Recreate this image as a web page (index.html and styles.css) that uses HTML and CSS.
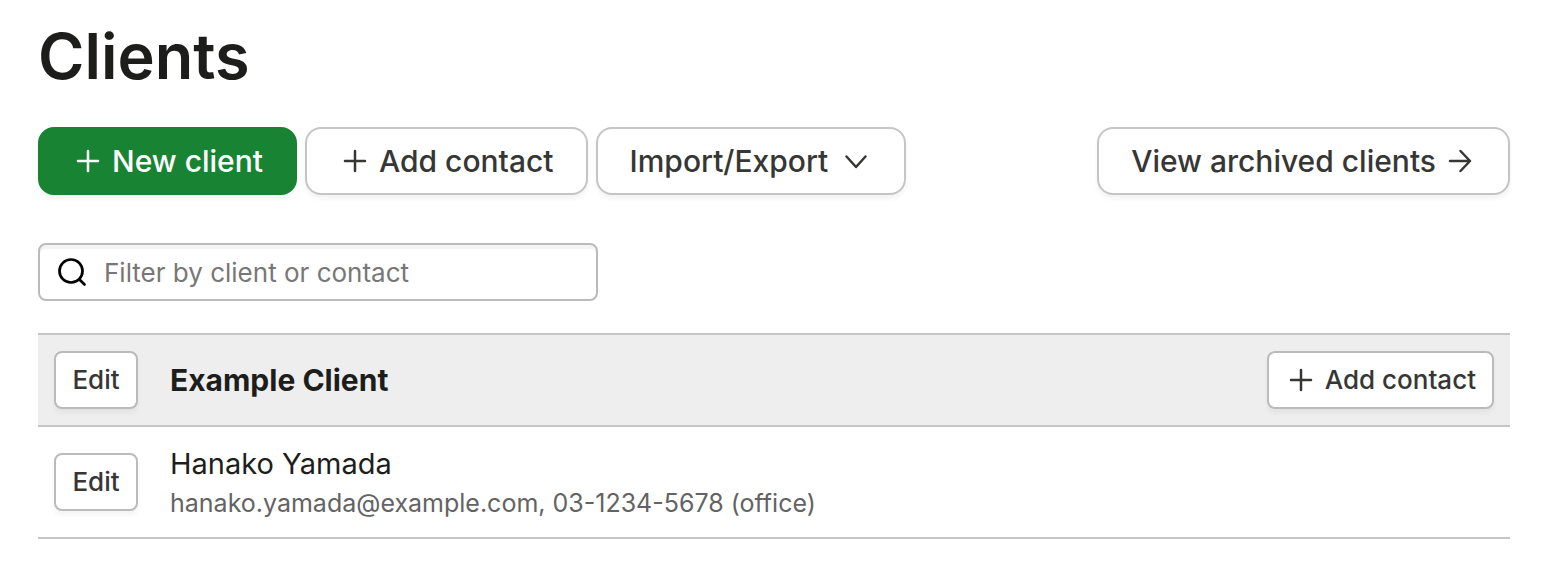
FILE: index.html
```html
<!DOCTYPE html>
<html lang="en">
<head>
<meta charset="utf-8">
<meta name="viewport" content="width=device-width, initial-scale=1">
<title>Clients</title>
<link rel="stylesheet" href="styles.css">
</head>
<body>
<main class="page">
  <h1 class="page-title">Clients</h1>

  <div class="toolbar">
    <button class="button button-primary" type="button">
      <svg class="icon" viewBox="0 0 32 32" aria-hidden="true"><path d="M16 6v20M6 16h20"/></svg>
      New client
    </button>
    <button class="button" type="button">
      <svg class="icon" viewBox="0 0 32 32" aria-hidden="true"><path d="M16 6v20M6 16h20"/></svg>
      Add contact
    </button>
    <button class="button button-menu" type="button" aria-haspopup="menu">
      Import/Export
      <svg class="icon" viewBox="0 0 32 32" aria-hidden="true"><path d="M6.500 11.500l9.500 10.500L25.500 11.500"/></svg>
    </button>
    <a class="button toolbar-end" href="#archived">
      View archived clients
      <svg class="icon" viewBox="0 0 32 32" aria-hidden="true"><path d="M6 16h20M16.500 6l9.500 10l-9.500 10"/></svg>
    </a>
  </div>

  <div class="search">
    <svg class="icon search-icon" viewBox="0 0 32 32" aria-hidden="true"><circle cx="15" cy="15" r="11.500"/><path d="M23.200 23.200l5.300 5.300"/></svg>
    <input class="search-input" type="search" placeholder="Filter by client or contact" aria-label="Filter by client or contact">
  </div>

  <section class="client">
    <header class="client-header">
      <button class="button button-small" type="button">Edit</button>
      <h2 class="client-name">Example Client</h2>
      <button class="button button-small" type="button">
        <svg class="icon" viewBox="0 0 32 32" aria-hidden="true"><path d="M16 6v20M6 16h20"/></svg>
        Add contact
      </button>
    </header>
    <ul class="contacts">
      <li class="contact">
        <button class="button button-small" type="button">Edit</button>
        <div class="contact-info">
          <p class="contact-name">Hanako Yamada</p>
          <p class="contact-detail">hanako.yamada@example.com, 03-1234-5678 (office)</p>
        </div>
      </li>
    </ul>
  </section>
</main>
</body>
</html>
```
FILE: styles.css
```css
* {
  box-sizing: border-box;
}

body {
  margin: 0;
  background: #fff;
  color: #1d1e1c;
  font-family: Inter, "Liberation Sans", sans-serif;
}

h1, h2, p, ul {
  margin: 0;
  padding: 0;
}

.page {
  padding: 16px 34px 38px 38px;
}

.page-title {
  margin-bottom: 31px;
  font-size: 63px;
  font-weight: 600;
  line-height: 80px;
}

.toolbar {
  display: flex;
  flex-wrap: wrap;
  gap: 8px;
  margin-bottom: 48px;
}

.toolbar-end {
  margin-left: auto;
}

.button {
  display: inline-flex;
  align-items: center;
  justify-content: center;
  gap: 8px;
  flex-shrink: 0;
  padding: 12px 32px;
  border: 2px solid #c5c5c5;
  border-radius: 16px;
  background: #fff;
  color: #363735;
  box-shadow: 0 4px 4px rgba(29, 30, 28, 0.05);
  font-family: inherit;
  font-size: 30px;
  font-weight: 500;
  line-height: 40px;
  text-decoration: none;
  white-space: nowrap;
  cursor: pointer;
}

.button-primary {
  border-color: #188433;
  background: #188433;
  color: #fff;
}

.button-menu {
  gap: 12px;
}

.button-small {
  min-width: 84px;
  padding: 7px 16px;
  border-color: #bbb;
  border-radius: 8px;
  font-size: 26px;
}

.icon {
  flex-shrink: 0;
  width: 32px;
  height: 32px;
  fill: none;
  stroke: currentColor;
  stroke-width: 2.500;
  stroke-linecap: round;
  stroke-linejoin: round;
}

.search {
  display: flex;
  align-items: center;
  gap: 16px;
  width: 100%;
  max-width: 560px;
  margin-bottom: 32px;
  padding: 7px 16px;
  border: 2px solid #bbb;
  border-radius: 8px;
  box-shadow: inset 0 4px 0 #f4f4f4;
}

.search-icon {
  color: #000;
  stroke-width: 2.700;
}

.search-input {
  flex: 1;
  min-width: 0;
  height: 40px;
  padding: 0;
  border: 0;
  outline: 0;
  background: transparent;
  color: inherit;
  font-family: inherit;
  font-size: 26px;
}

.search-input::placeholder {
  color: #777;
  opacity: 1;
}

.client-header,
.contact {
  display: flex;
  align-items: center;
  gap: 32px;
  padding: 16px;
  border-bottom: 2px solid #c5c5c5;
}

.client-header {
  border-top: 2px solid #c5c5c5;
  background: #eee;
}

.client-name {
  flex: 1;
  font-size: 30px;
  font-weight: 700;
  line-height: 40px;
}

.contacts {
  list-style: none;
}

.contact-info {
  min-width: 0;
}

.contact-name {
  font-size: 29px;
  line-height: 42px;
}

.contact-detail {
  color: #636363;
  font-size: 25px;
  line-height: 36px;
}
```
